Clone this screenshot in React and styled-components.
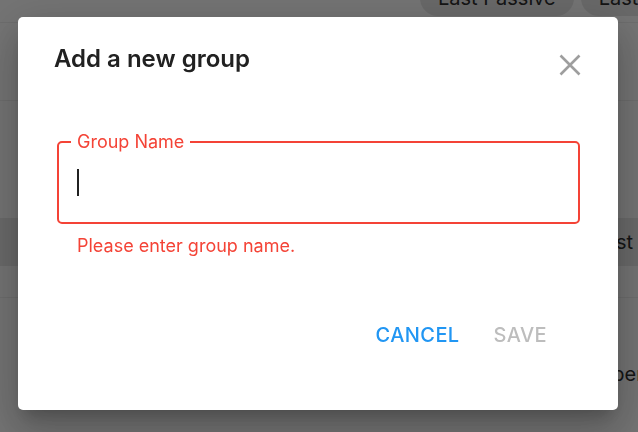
import React from "react";
import styled, { createGlobalStyle } from "styled-components";

const GlobalStyle = createGlobalStyle`
  html, body { margin: 0; padding: 0; }
  body {
    font-family: Inter, "Noto Sans", "Liberation Sans", sans-serif;
    background: #e6e6e6;
    overflow: hidden;
  }
`;

const Page = styled.div`
  width: 638px;
  height: 432px;
  overflow: hidden;
  display: flex;
  flex-direction: column;
  background: #e8e8e8;
  color: #222;
`;

const ChipBar = styled.div`
  display: flex;
  gap: 7px;
  height: 36px;
  margin-top: -20px;
  padding-left: 420px;
  flex-shrink: 0;
`;

const Chip = styled.div`
  height: 36px;
  padding: 0 18px;
  border-radius: 18px;
  background: #d2d2d2;
  font-size: 20px;
  display: flex;
  align-items: center;
  white-space: nowrap;
  color: #2a2a2a;
  flex-shrink: 0;
`;

const Band = styled.div`
  height: ${(p) => p.$h}px;
  flex-shrink: 0;
  box-sizing: border-box;
  background: ${(p) => p.$bg || "transparent"};
  border-bottom: ${(p) => (p.$line ? "1px solid #dadada" : "none")};
  display: flex;
  align-items: center;
  justify-content: flex-end;
  font-size: 20px;
  color: #2a2a2a;
  white-space: nowrap;
`;

const BandText = styled.span`
  margin-right: ${(p) => p.$mr}px;
`;

const Backdrop = styled.div`
  position: fixed;
  inset: 0;
  background: rgba(0, 0, 0, 0.5);
`;

const Dialog = styled.div`
  position: fixed;
  left: 18px;
  top: 17px;
  width: 600px;
  height: 393px;
  box-sizing: border-box;
  background: #fff;
  border-radius: 5px;
  box-shadow: 0 11px 15px -7px rgba(0, 0, 0, 0.2),
    0 24px 38px 3px rgba(0, 0, 0, 0.14), 0 9px 46px 8px rgba(0, 0, 0, 0.12);
  display: flex;
  flex-direction: column;
  padding: 27px 36px 0 36px;
`;

const Header = styled.div`
  display: flex;
  align-items: flex-start;
  justify-content: space-between;
`;

const Title = styled.h2`
  margin: 0;
  font-size: 24px;
  line-height: 29px;
  font-weight: 600;
  color: #212121;
`;

const CloseButton = styled.button`
  border: none;
  background: none;
  padding: 0;
  width: 24px;
  height: 24px;
  margin-top: 9px;
  display: block;
  cursor: pointer;
`;

const Field = styled.fieldset`
  margin: 54px 2px 0 3px;
  padding: 0 18px;
  border: 2px solid #f44336;
  border-radius: 5px;
  height: 93px;
  box-sizing: border-box;
  min-width: 0;
`;

const Legend = styled.legend`
  padding: 0 6px;
  margin-left: -6px;
  font-size: 18px;
  line-height: 22px;
  color: #f44336;
`;

const InputArea = styled.div`
  padding-top: 16px;
`;

const Caret = styled.span`
  display: block;
  width: 2px;
  height: 27px;
  background: #212121;
`;

const Helper = styled.p`
  margin: 11px 0 0 23px;
  font-size: 18px;
  line-height: 22px;
  color: #f44336;
`;

const Footer = styled.div`
  display: flex;
  justify-content: flex-end;
  gap: 34px;
  margin-top: 66px;
  padding-right: 35px;
`;

const TextButton = styled.button`
  border: none;
  background: none;
  padding: 0;
  font-family: inherit;
  font-size: 20px;
  line-height: 24px;
  font-weight: 500;
  letter-spacing: 0.4px;
  text-transform: uppercase;
  color: ${(p) => (p.disabled ? "#bdbdbd" : "#2196f3")};
  cursor: ${(p) => (p.disabled ? "default" : "pointer")};
`;

export default function App() {
  return (
    <>
      <GlobalStyle />
      <Page>
        <ChipBar>
          <Chip>Last Passive</Chip>
          <Chip>Last Active</Chip>
        </ChipBar>
        <Band $h={7} $line />
        <Band $h={78} $line />
        <Band $h={117} />
        <Band $h={48} $bg="#d4d4d4">
          <BandText $mr={5}>Last</BandText>
        </Band>
        <Band $h={32} $line />
        <Band $h={152}>
          <BandText $mr={-10}>Open</BandText>
        </Band>
      </Page>
      <Backdrop />
      <Dialog role="dialog" aria-labelledby="dlg-title">
        <Header>
          <Title id="dlg-title">Add a new group</Title>
          <CloseButton aria-label="close">
            <svg width="24" height="24" viewBox="0 0 24 24">
              <path
                d="M2.5 2.5 L21.5 21.5 M21.5 2.5 L2.5 21.5"
                stroke="#9e9e9e"
                strokeWidth="2.6"
              />
            </svg>
          </CloseButton>
        </Header>
        <Field>
          <Legend>Group Name</Legend>
          <InputArea>
            <Caret />
          </InputArea>
        </Field>
        <Helper>Please enter group name.</Helper>
        <Footer>
          <TextButton>Cancel</TextButton>
          <TextButton disabled>Save</TextButton>
        </Footer>
      </Dialog>
    </>
  );
}
